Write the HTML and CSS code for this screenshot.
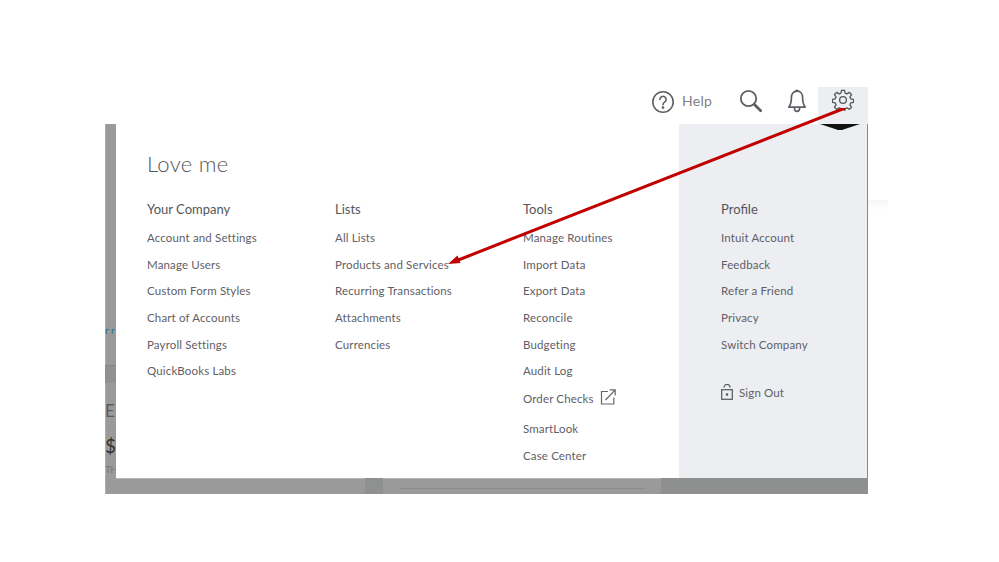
FILE: index.html
```html
<!DOCTYPE html>
<html lang="en">
<head>
<meta charset="utf-8">
<title>Settings menu</title>
<link rel="stylesheet" href="styles.css">
</head>
<body>
<div class="shot">
  <header class="topbar">
    <div class="help">
      <svg class="ico-help" width="24" height="24" viewBox="0 0 24 24" fill="none" stroke="#5f6066" stroke-width="1.6"><circle cx="12" cy="12" r="10.2"/><path d="M8.9 9.4a3.1 3.1 0 1 1 4.7 2.7c-1 .6-1.6 1.2-1.6 2.6" stroke-linecap="round"/><circle cx="12" cy="17.6" r=".6" fill="#5f6066"/></svg>
      <span>Help</span>
    </div>
    <svg class="ico-search" width="24" height="24" viewBox="0 0 24 24" fill="none" stroke="#5f6066"><circle cx="9.500" cy="9.500" r="7.700" stroke-width="1.800"/><path d="M15.200 15.200l6.500 6.500" stroke-width="2.800" stroke-linecap="round"/></svg>
    <svg class="ico-bell" width="20" height="26" viewBox="0 0 20 26" fill="none" stroke="#5f6066" stroke-width="1.700" stroke-linejoin="round"><path d="M10 3.200c-3.600 0-5.600 2.800-5.600 6.400 0 4.500-.7 7.200-2.600 9.500h16.400c-1.900-2.300-2.600-5-2.600-9.500 0-3.600-2-6.400-5.600-6.400z"/><path d="M8.600 3.300a1.500 1.500 0 0 1 2.800 0"/><path d="M7.500 19.300v1.500a2.500 2.500 0 0 0 5 0v-1.500"/></svg>
    <div class="gear-tab">
      <svg width="22" height="22" viewBox="0 0 24 24" fill="none" stroke="#55565c" stroke-width="1.400" stroke-linejoin="round"><circle cx="12" cy="12" r="3.700"/><path d="M10.300 1.500h3.400l.6 3 2 .85 2.600-1.700 2.400 2.400-1.700 2.600.85 2 3 .6v3.400l-3 .6-.85 2 1.700 2.600-2.400 2.400-2.600-1.700-2 .85-.6 3h-3.400l-.6-3-2-.85-2.600 1.700-2.400-2.400 1.700-2.600-.85-2-3-.6v-3.400l3-.6.85-2-1.700-2.600 2.400-2.400 2.600 1.700 2-.85z"/></svg>
    </div>
  </header>

  <div class="backdrop">
    <div class="behind">
      <span class="b-link">r r</span>
      <span class="b-rule"></span>
      <span class="b-ex">E</span>
      <span class="b-dollar">$</span>
      <span class="b-th">TH</span>
    </div>
    <div class="panel">
      <div class="main">
        <h1 class="title">Love me</h1>
        <div class="cols">
          <section class="col">
            <h2>Your Company</h2>
            <ul>
              <li>Account and Settings</li>
              <li>Manage Users</li>
              <li>Custom Form Styles</li>
              <li>Chart of Accounts</li>
              <li>Payroll Settings</li>
              <li>QuickBooks Labs</li>
            </ul>
          </section>
          <section class="col">
            <h2>Lists</h2>
            <ul>
              <li>All Lists</li>
              <li>Products and Services</li>
              <li>Recurring Transactions</li>
              <li>Attachments</li>
              <li>Currencies</li>
            </ul>
          </section>
          <section class="col">
            <h2>Tools</h2>
            <ul>
              <li>Manage Routines</li>
              <li>Import Data</li>
              <li>Export Data</li>
              <li>Reconcile</li>
              <li>Budgeting</li>
              <li>Audit Log</li>
              <li class="order">Order Checks
                <svg width="16" height="16" viewBox="0 0 16 16" fill="none" stroke="#66676d" stroke-width="1.200"><path d="M8 2.500H1.500v12.500h12.300V8.500"/><path d="M5.500 11L15 1.200M9.700 .9h5.500v5.500"/></svg>
              </li>
              <li class="smart">SmartLook</li>
              <li>Case Center</li>
            </ul>
          </section>
        </div>
      </div>
      <aside class="profile">
        <h2>Profile</h2>
        <ul>
          <li>Intuit Account</li>
          <li>Feedback</li>
          <li>Refer a Friend</li>
          <li>Privacy</li>
          <li>Switch Company</li>
        </ul>
        <div class="signout">
          <svg width="12" height="16" viewBox="0 0 12 16" fill="none" stroke="#55565c" stroke-width="1.200"><rect x=".7" y="5.700" width="10.600" height="9.600"/><path d="M3 3.500a3 3 0 0 1 6 0"/><circle cx="6" cy="10.500" r=".7" fill="#55565c"/></svg>
          <span>Sign Out</span>
        </div>
      </aside>
    </div>
    <div class="under">
      <div class="seg seg-a"></div>
      <div class="seg seg-b"></div>
      <div class="seg seg-c"><div class="seg-line"></div></div>
      <div class="seg seg-d"></div>
    </div>
    <div class="notch"></div>
    <div class="edge-glow"></div>
  </div>

  <svg class="arrow" width="420" height="170" viewBox="0 0 420 170">
    <path d="M398 0L10 152.500" stroke="#c00000" stroke-width="3" fill="none"/>
    <path d="M1 156L10.500 147.500 13.500 155z" fill="#c00000"/>
  </svg>
</div>
</body>
</html>
```

FILE: styles.css
```css
* { box-sizing: border-box; }
html, body { margin: 0; padding: 0; background: #fff; }
body { width: 999px; height: 562px; overflow: hidden; font-family: Lato, "Noto Sans", sans-serif; color: #5f6066; }
ul { list-style: none; margin: 0; padding: 0; }
h1, h2 { margin: 0; font-weight: 400; }

.shot { position: relative; width: 763px; margin: 87px 0 0 105px; }

.topbar { display: flex; align-items: flex-start; height: 37px; padding-left: 546px; }
.help { display: flex; align-items: flex-start; gap: 7px; width: 88px; height: 28px; margin-top: 3px; font-size: 14px; line-height: 22px; color: #808187; letter-spacing: .3px; }
.ico-help { flex: none; }
.ico-search { margin-top: 2px; }
.ico-bell { margin: 1px 0 0 24px; }
.gear-tab { display: flex; justify-content: center; width: 50px; height: 37px; margin-left: 11px; padding-top: 2px; background: #eceef1; }

.backdrop { position: relative; height: 370px; padding-left: 0; background: #9a9a9a; box-shadow: inset 1px 0 #aeaeae; }
.behind { position: absolute; left: 0; top: 0; width: 11px; height: 100%; overflow: hidden; color: #4f4f4f; }
.behind span { position: absolute; left: 0; white-space: nowrap; }
.b-link { top: 200px; font-size: 10px; color: #2a6f97; }
.b-rule { top: 241px; width: 11px; height: 18px; background: #919191; border-top: 1px solid #868686; }
.b-ex { top: 276px; font-size: 17px; color: #5c5c5c; }
.b-dollar { top: 310px; left: 0; font-size: 19px; color: #333; }
.b-th { top: 339px; font-size: 10px; letter-spacing: -.6px; color: #777; }

.panel { display: flex; height: 354px; margin-left: 11px; background: #fff; border-right: 1px solid #87888c; box-shadow: 0 1px 0 #b5b6b8; }
.main { flex: none; width: 563px; padding: 26px 0 0 31px; }
.title { font-size: 22px; line-height: 28px; font-weight: 300; color: #55565c; letter-spacing: .3px; }
.cols { display: flex; margin-top: 23px; }
.col { flex: 0 0 188px; }
h2 { font-size: 13px; line-height: 16px; color: #55565c; }
.col li, .profile li { height: 26.700px; font-size: 11.500px; line-height: 16px; letter-spacing: .15px; white-space: nowrap; }
.col ul, .profile ul { margin-top: 13px; }
.order { display: flex; align-items: flex-start; gap: 6px; height: 29.500px !important; margin-top: 1px; }
.order svg { flex: none; margin-top: -2px; }
.col .smart { height: 27px; }

.profile { flex: 1; padding: 77px 0 0 42px; background: #eceef1; }
.signout { display: flex; align-items: center; gap: 6px; margin-top: 21px; font-size: 11.500px; letter-spacing: .15px; }

.under { display: flex; height: 16px; }
.seg { height: 100%; }
.seg-a { width: 260px; }
.seg-b { width: 18px; background: #8f9090; }
.seg-c { width: 278px; padding: 10px 15px 0 17px; }
.seg-line { height: 1px; background: #8c8c8c; }
.seg-d { flex: 1; background: #8e8f8f; }

.notch { position: absolute; right: 8px; top: 0; width: 40px; height: 6px; background: #111; clip-path: polygon(0 0, 100% 0, 55% 100%, 45% 100%); }
.edge-glow { position: absolute; left: 763px; top: 76px; width: 20px; height: 10px; background: linear-gradient(#f6f6f6, #fff); }

.arrow { position: absolute; left: 342px; top: 21px; }
```
